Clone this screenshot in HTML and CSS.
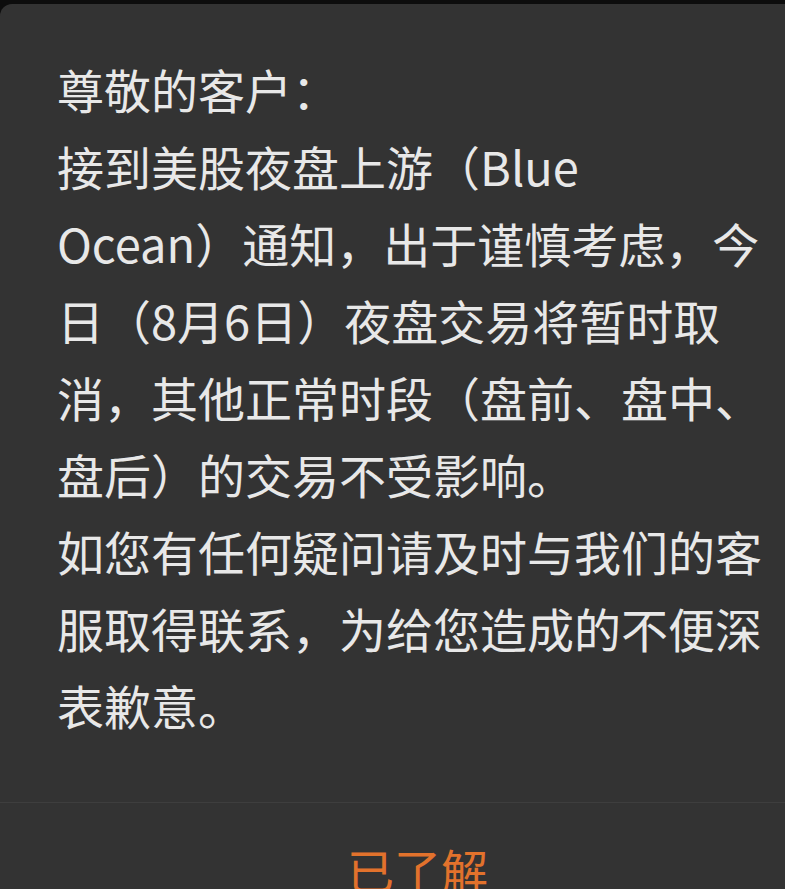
FILE: index.html
```html
<!DOCTYPE html>
<html>
<head>
    <meta charset="utf-8">
    <meta name="viewport" content="width=device-width, initial-scale=1">
    <title>通知</title>
    <link rel="stylesheet" href="styles.css">
</head>
<body>
    <div class="dialog">
        <div class="content">
            <div class="title">尊敬的客户：</div>
            <p>接到美股夜盘上游（Blue<br />Ocean）通知，出于谨慎考虑，今<br />日（8月6日）夜盘交易将暂时取<br />消，其他正常时段（盘前、盘中、<br />盘后）的交易不受影响。</p>
            <p>如您有任何疑问请及时与我们的客<br />服取得联系，为给您造成的不便深<br />表歉意。</p>
        </div>
        <div class="actions">
            <span class="btn">已了解</span>
        </div>
    </div>
</body>
</html>
```

FILE: styles.css
```css
html, body {
    margin: 0;
    background: #0d0d0d;
    overflow: hidden;
}

body {
    padding-top: 4px;
    font-family: "Noto Sans CJK SC", "Noto Sans", sans-serif;
}

.dialog {
    min-height: 900px;
    background: #333333;
    border-radius: 12px 0 0 0;
}

.content {
    padding: 46px 0 59px 57px;
    font-size: 47px;
    line-height: 77px;
    color: #e8e8e8;
}

.content p {
    margin: 0;
}

.actions {
    border-top: 1px solid #3e3e3e;
    padding: 27px 0 0 50px;
    text-align: center;
    font-size: 47px;
    line-height: 77px;
}

.btn {
    color: #e2722c;
    cursor: pointer;
}
```
